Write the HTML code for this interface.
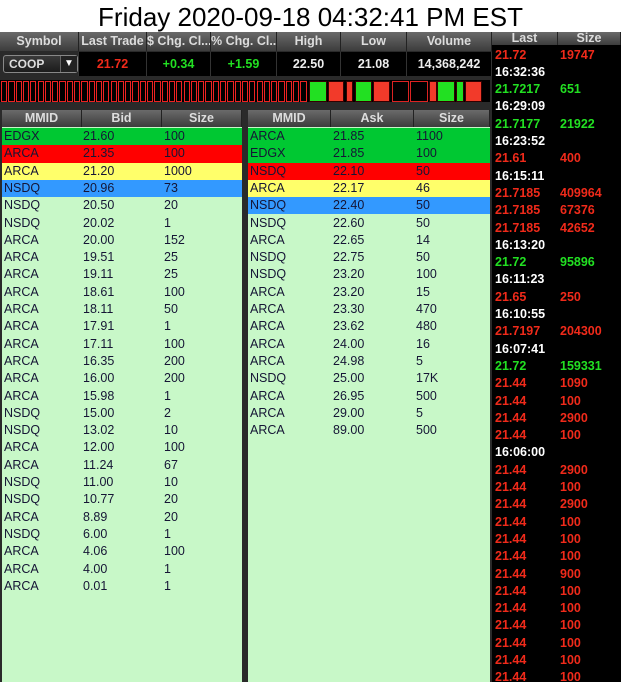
<!DOCTYPE html>
<html><head><meta charset="utf-8"><style>
*{margin:0;padding:0;box-sizing:border-box}
body{width:621px;height:682px;background:#fff;position:relative;overflow:hidden;font-family:"Liberation Sans",sans-serif}
.abs{position:absolute}
#title{left:0;top:0;width:621px;height:32px;background:#fff;font-size:26px;color:#000;text-align:center;line-height:34px}
#main{left:0;top:32px;width:492px;height:650px;background:#2a2a2a}
.hd{position:absolute;background:linear-gradient(#6a6a6a,#3c3c3c);color:#ddd;font-weight:bold;font-size:12.5px;text-align:center;border-right:1px solid #222;white-space:nowrap;overflow:hidden}
.val{position:absolute;top:52px;height:24px;background:#000;color:#eee;font-weight:bold;font-size:12.5px;text-align:center;line-height:24px;border-right:1px solid #333}
#bar{left:0;top:80px;width:490px;height:22px;background:#000;display:flex}
.h{height:22px;border:1px solid #e22;background:#000}
.panel{position:absolute;top:110px;height:572px;background:#c8f8c8}
.row{position:absolute;left:0;right:0;height:17.3px;font-size:12.5px;color:#151535;line-height:17px}
.row span{position:absolute}
#tape{left:492px;top:32px;width:129px;height:650px;background:#000}
.tr{position:absolute;left:3px;height:17.3px;font-size:12.5px;font-weight:bold;line-height:17px;white-space:nowrap}
.tr span{position:absolute;left:65px}
.r{color:#f02a1a}.g{color:#22e022}.w{color:#fff}
</style></head><body>
<div id="title" class="abs">Friday 2020-09-18 04:32:41 PM EST</div>
<div id="main" class="abs"></div>
<div class="hd" style="left:0;top:32px;width:79px;height:19px;line-height:19px">Symbol</div>
<div class="hd" style="left:79px;top:32px;width:68px;height:19px;line-height:19px">Last Trade</div>
<div class="hd" style="left:147px;top:32px;width:64px;height:19px;line-height:19px">$ Chg. Cl...</div>
<div class="hd" style="left:211px;top:32px;width:66px;height:19px;line-height:19px">% Chg. Cl...</div>
<div class="hd" style="left:277px;top:32px;width:64px;height:19px;line-height:19px">High</div>
<div class="hd" style="left:341px;top:32px;width:66px;height:19px;line-height:19px">Low</div>
<div class="hd" style="left:407px;top:32px;width:85px;height:19px;line-height:19px">Volume</div>
<div class="val" style="left:0;width:79px;background:#2a2a2a"></div>
<div class="abs" style="left:3px;top:55px;width:75px;height:18px;border:1px solid #888;border-radius:3px;background:linear-gradient(#3a3a3a,#1c1c1c);color:#ddd;font-weight:bold;font-size:12px;line-height:16px;padding-left:5px">COOP<div class="abs" style="right:0;top:0;width:17px;height:16px;background:#222;border-left:1px solid #666;color:#fff;text-align:center;font-size:10px">▼</div></div>
<div class="val r" style="left:79px;width:68px;color:#f02a1a">21.72</div>
<div class="val" style="left:147px;width:64px;color:#22e022">+0.34</div>
<div class="val" style="left:211px;width:66px;color:#22e022">+1.59</div>
<div class="val" style="left:277px;width:64px">22.50</div>
<div class="val" style="left:341px;width:66px">21.08</div>
<div class="val" style="left:407px;width:85px">14,368,242</div>
<div id="bar" class="abs"></div>
<div id="segs"></div>
<div class="panel" style="left:2px;width:240px">
<div class="hd" style="left:0;top:0;width:80px;height:17px;line-height:17px">MMID</div>
<div class="hd" style="left:80px;top:0;width:80px;height:17px;line-height:17px">Bid</div>
<div class="hd" style="left:160px;top:0;width:80px;height:17px;line-height:17px">Size</div>
<div id="bids"></div>
</div>
<div class="panel" style="left:248px;width:242px">
<div class="hd" style="left:0;top:0;width:83px;height:17px;line-height:17px">MMID</div>
<div class="hd" style="left:83px;top:0;width:83px;height:17px;line-height:17px">Ask</div>
<div class="hd" style="left:166px;top:0;width:76px;height:17px;line-height:17px">Size</div>
<div id="asks"></div>
</div>
<div id="tape" class="abs">
<div class="hd" style="left:0;top:0;width:66px;height:13px;line-height:12px">Last</div>
<div class="hd" style="left:66px;top:0;width:63px;height:13px;line-height:12px">Size</div>
<div id="tr"></div>
</div>
<script>
var h='';for(var i=0;i<42;i++){h+='<div class="abs h" style="left:'+(1+i*7.3).toFixed(1)+'px;top:81px;width:6.3px;height:21px"></div>';}
var blocks=[[309,18,'g'],[328,16,'r'],[346,7,'r'],[355,17,'g'],[373,17,'r'],[392,17,'h'],[410,18,'h'],[429,8,'r'],[437,18,'g'],[456,8,'g'],[465,17,'r']];
blocks.forEach(function(b){var bg=b[2]=='g'?'#22e022':b[2]=='r'?'#f23a2a':'#000';h+='<div class="abs" style="left:'+b[0]+'px;top:81px;width:'+b[1]+'px;height:21px;background:'+bg+';border:1px solid '+(b[2]=='h'?'#d22':'#300')+'"></div>';});
document.getElementById('segs').innerHTML=h;
var cols={G:'#00c832',R:'#ff0000',Y:'#ffff6a',B:'#3399ff'};
function book(id,rows,x2,x3){var s='';rows.forEach(function(r,i){var bg=r[3]?'background:'+cols[r[3]]:'';s+='<div class="row" style="top:'+(18+i*17.3).toFixed(1)+'px;'+bg+'"><span style="left:2px">'+r[0]+'</span><span style="left:'+x2+'px">'+r[1]+'</span><span style="left:'+x3+'px">'+r[2]+'</span></div>';});document.getElementById(id).innerHTML=s;}
book('bids',[['EDGX','21.60','100','G'],['ARCA','21.35','100','R'],['ARCA','21.20','1000','Y'],['NSDQ','20.96','73','B'],['NSDQ','20.50','20'],['NSDQ','20.02','1'],['ARCA','20.00','152'],['ARCA','19.51','25'],['ARCA','19.11','25'],['ARCA','18.61','100'],['ARCA','18.11','50'],['ARCA','17.91','1'],['ARCA','17.11','100'],['ARCA','16.35','200'],['ARCA','16.00','200'],['ARCA','15.98','1'],['NSDQ','15.00','2'],['NSDQ','13.02','10'],['ARCA','12.00','100'],['ARCA','11.24','67'],['NSDQ','11.00','10'],['NSDQ','10.77','20'],['ARCA','8.89','20'],['NSDQ','6.00','1'],['ARCA','4.06','100'],['ARCA','4.00','1'],['ARCA','0.01','1']],81,162);
book('asks',[['ARCA','21.85','1100','G'],['EDGX','21.85','100','G'],['NSDQ','22.10','50','R'],['ARCA','22.17','46','Y'],['NSDQ','22.40','50','B'],['NSDQ','22.60','50'],['ARCA','22.65','14'],['NSDQ','22.75','50'],['NSDQ','23.20','100'],['ARCA','23.20','15'],['ARCA','23.30','470'],['ARCA','23.62','480'],['ARCA','24.00','16'],['ARCA','24.98','5'],['NSDQ','25.00','17K'],['ARCA','26.95','500'],['ARCA','29.00','5'],['ARCA','89.00','500']],85,168);
var t=[['r','21.72','19747'],['w','16:32:36'],['g','21.7217','651'],['w','16:29:09'],['g','21.7177','21922'],['w','16:23:52'],['r','21.61','400'],['w','16:15:11'],['r','21.7185','409964'],['r','21.7185','67376'],['r','21.7185','42652'],['w','16:13:20'],['g','21.72','95896'],['w','16:11:23'],['r','21.65','250'],['w','16:10:55'],['r','21.7197','204300'],['w','16:07:41'],['g','21.72','159331'],['r','21.44','1090'],['r','21.44','100'],['r','21.44','2900'],['r','21.44','100'],['w','16:06:00'],['r','21.44','2900'],['r','21.44','100'],['r','21.44','2900'],['r','21.44','100'],['r','21.44','100'],['r','21.44','100'],['r','21.44','900'],['r','21.44','100'],['r','21.44','100'],['r','21.44','100'],['r','21.44','100'],['r','21.44','100'],['r','21.44','100']];
var s='';t.forEach(function(r,i){s+='<div class="tr '+r[0]+'" style="top:'+(14.5+i*17.3).toFixed(1)+'px">'+r[1]+(r[2]?'<span>'+r[2]+'</span>':'')+'</div>';});
document.getElementById('tr').innerHTML=s;
</script>
</body></html>
